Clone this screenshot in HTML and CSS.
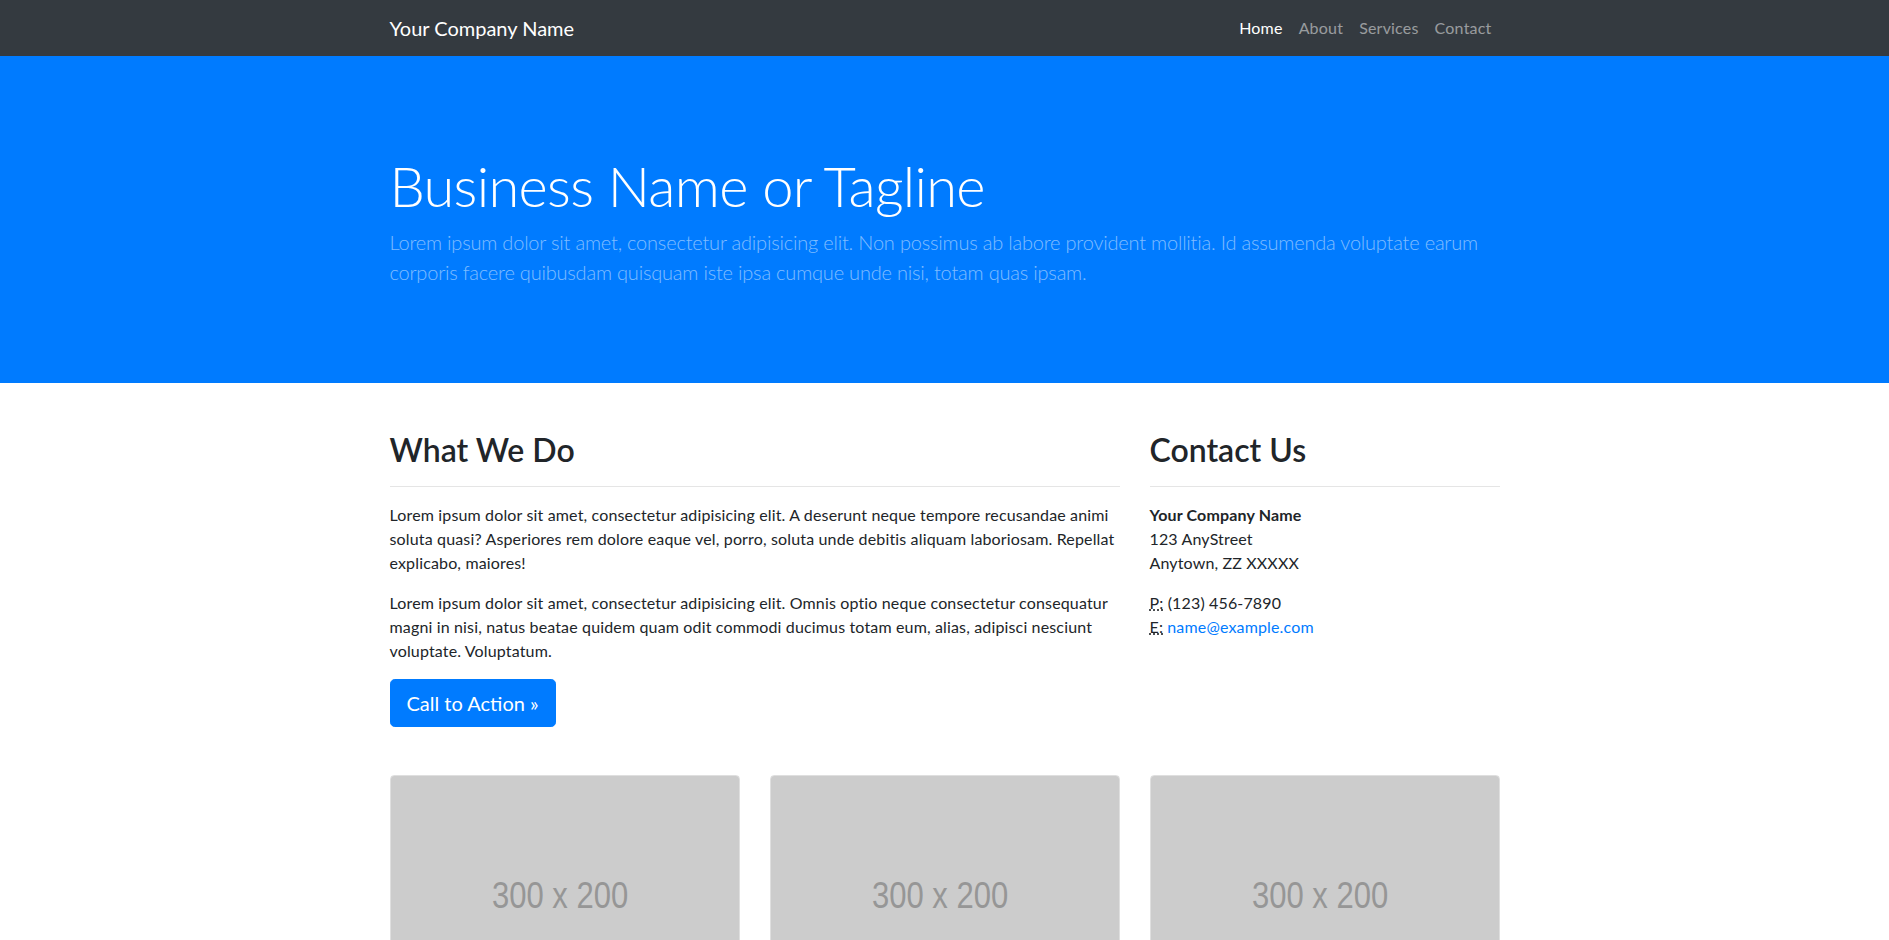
FILE: index.html
```html
<!DOCTYPE html>
<html lang="en">
<head>
<meta charset="utf-8">
<title>Business Frontpage</title>
<link rel="stylesheet" href="styles.css">
</head>
<body>
<nav class="navbar">
  <div class="container nav-inner">
    <a class="brand" href="#">Your Company Name</a>
    <ul class="nav-links">
      <li><a class="nav-link active" href="#">Home</a></li>
      <li><a class="nav-link" href="#">About</a></li>
      <li><a class="nav-link" href="#">Services</a></li>
      <li><a class="nav-link" href="#">Contact</a></li>
    </ul>
  </div>
</nav>

<header class="hero">
  <div class="container">
    <h1 class="hero-title">Business Name or Tagline</h1>
    <p class="lead">Lorem ipsum dolor sit amet, consectetur adipisicing elit. Non possimus ab labore provident mollitia. Id assumenda voluptate earum corporis facere quibusdam quisquam iste ipsa cumque unde nisi, totam quas ipsam.</p>
  </div>
</header>

<main class="container content">
  <div class="row">
    <div class="col-8">
      <h2>What We Do</h2>
      <hr>
      <p>Lorem ipsum dolor sit amet, consectetur adipisicing elit. A deserunt neque tempore recusandae animi soluta quasi? Asperiores rem dolore eaque vel, porro, soluta unde debitis aliquam laboriosam. Repellat explicabo, maiores!</p>
      <p>Lorem ipsum dolor sit amet, consectetur adipisicing elit. Omnis optio neque consectetur consequatur magni in nisi, natus beatae quidem quam odit commodi ducimus totam eum, alias, adipisci nesciunt voluptate. Voluptatum.</p>
      <a class="btn" href="#">Call to Action &raquo;</a>
    </div>
    <div class="col-4">
      <h2>Contact Us</h2>
      <hr>
      <address>
        <strong>Your Company Name</strong><br>
        123 AnyStreet<br>
        Anytown, ZZ XXXXX
      </address>
      <address>
        <abbr title="Phone">P:</abbr> (123) 456-7890<br>
        <abbr title="Email">E:</abbr> <a class="mail" href="#">name@example.com</a>
      </address>
    </div>
  </div>

  <div class="cards">
    <div class="card">
      <div class="ph">
        <svg viewBox="0 0 350 233" width="350" height="233"><text x="170" y="132" text-anchor="middle" textLength="137" lengthAdjust="spacingAndGlyphs" class="ph-text">300 x 200</text></svg>
      </div>
    </div>
    <div class="card">
      <div class="ph">
        <svg viewBox="0 0 350 233" width="350" height="233"><text x="170" y="132" text-anchor="middle" textLength="137" lengthAdjust="spacingAndGlyphs" class="ph-text">300 x 200</text></svg>
      </div>
    </div>
    <div class="card">
      <div class="ph">
        <svg viewBox="0 0 350 233" width="350" height="233"><text x="170" y="132" text-anchor="middle" textLength="137" lengthAdjust="spacingAndGlyphs" class="ph-text">300 x 200</text></svg>
      </div>
    </div>
  </div>
</main>
</body>
</html>
```

FILE: styles.css
```css
* { box-sizing: border-box; }

html, body {
  margin: 0;
  padding: 0;
}

body {
  font-family: Lato, "Open Sans", "Liberation Sans", sans-serif;
  font-size: 16px;
  line-height: 1.5;
  color: #212529;
  background: #fff;
}

a { text-decoration: none; }

.container {
  width: 1140px;
  margin: 0 auto;
  padding: 0 15px;
}

/* navbar */
.navbar {
  background: #343a40;
  padding: 8px 0;
}

.nav-inner {
  display: flex;
  align-items: center;
  justify-content: space-between;
}

.brand {
  color: #fff;
  font-size: 20px;
  line-height: 30px;
  padding: 5px 0;
}

.nav-links {
  display: flex;
  list-style: none;
  margin: 0;
  padding: 0;
}

.nav-link {
  display: block;
  padding: 8px 8px;
  color: rgba(255, 255, 255, 0.5);
  font-size: 16px;
  line-height: 24px;
  letter-spacing: 0.2px;
}

.nav-link.active { color: #fff; }

/* hero */
.hero {
  background: #007bff;
  padding: 48px 0 80px;
}

.hero-title {
  margin: 48px 0 8px;
  color: #fff;
  font-size: 56px;
  font-weight: 300;
  line-height: 1.2;
  letter-spacing: -0.7px;
}

.lead {
  margin: 0 0 16px;
  color: rgba(255, 255, 255, 0.5);
  font-size: 20px;
  font-weight: 300;
  line-height: 30px;
  letter-spacing: -0.2px;
}

/* content */
.content { margin-top: 48px; }

.row {
  display: flex;
  gap: 30px;
  margin-bottom: 48px;
}

.col-8 { flex: 0 0 730px; }
.col-4 { flex: 0 0 350px; }

h2 {
  margin: 0 0 8px;
  font-size: 32px;
  font-weight: 600;
  line-height: 1.2;
}

hr {
  margin: 16px 0;
  border: 0;
  border-top: 1px solid rgba(0, 0, 0, 0.1);
}

p {
  margin: 0 0 16px;
  letter-spacing: 0.15px;
}

address {
  margin: 0 0 16px;
  font-style: normal;
  letter-spacing: 0.15px;
}

abbr[title] {
  text-decoration: underline dotted;
  cursor: help;
}

.mail { color: #007bff; }

.btn {
  display: inline-block;
  background: #007bff;
  color: #fff;
  border: 1px solid #007bff;
  border-radius: 4.8px;
  padding: 8px 16px;
  font-size: 20px;
  line-height: 30px;
}

/* cards */
.cards {
  display: flex;
  gap: 30px;
}

.card {
  flex: 0 0 350px;
  border: 1px solid rgba(0, 0, 0, 0.125);
  border-radius: 4px;
  overflow: hidden;
  margin-bottom: 48px;
}

.ph {
  background: #cccccc;
  height: 233px;
}

.ph svg { display: block; width: 100%; height: 100%; }

.ph-text {
  font-family: "Liberation Sans", Arial, sans-serif;
  font-size: 37px;
  fill: #969696;
}
```
